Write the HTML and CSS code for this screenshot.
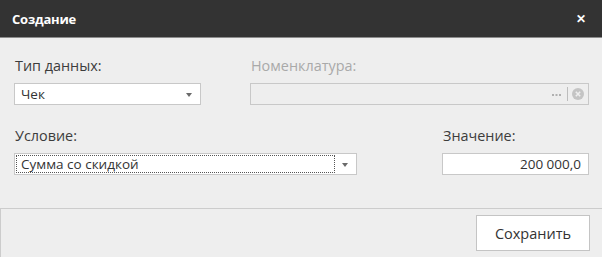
FILE: index.html
```html
<!DOCTYPE html>
<html lang="ru">
<head>
    <meta charset="UTF-8">
    <title>Создание</title>
    <link rel="stylesheet" href="styles.css">
</head>
<body>
    <div class="dialog">
        <div class="titlebar">
            <span class="title">Создание</span>
            <span class="close">&#x2715;</span>
        </div>
        <div class="content">
            <div class="row">
                <div class="field w-type">
                    <div class="label">Тип данных:</div>
                    <div class="box combo">
                        <span class="value">Чек</span>
                        <span class="arrow"></span>
                    </div>
                </div>
                <div class="field w-nom disabled">
                    <div class="label">Номенклатура:</div>
                    <div class="box lookup">
                        <span class="value"></span>
                        <span class="dots">
                            <svg width="9" height="2" viewBox="0 0 9 2">
                                <rect x="0" y="0" width="2" height="2" fill="#b0b0b0"/>
                                <rect x="3.5" y="0" width="2" height="2" fill="#b0b0b0"/>
                                <rect x="7" y="0" width="2" height="2" fill="#b0b0b0"/>
                            </svg>
                        </span>
                        <span class="sep"></span>
                        <span class="clear">
                            <svg width="12" height="12" viewBox="0 0 12 12">
                                <circle cx="6" cy="6" r="6" fill="#c4c4c4"/>
                                <path d="M3.8 3.8 L8.2 8.2 M8.2 3.8 L3.8 8.2" stroke="#eeeeee" stroke-width="1.6"/>
                            </svg>
                        </span>
                    </div>
                </div>
            </div>
            <div class="row second">
                <div class="field w-cond">
                    <div class="label">Условие:</div>
                    <div class="box combo">
                        <span class="value focused">Сумма со скидкой</span>
                        <span class="arrow"></span>
                    </div>
                </div>
                <div class="field w-val">
                    <div class="label">Значение:</div>
                    <div class="box number">
                        <span class="value">200 000,0</span>
                    </div>
                </div>
            </div>
        </div>
        <div class="footer">
            <button class="btn">Сохранить</button>
        </div>
    </div>
</body>
</html>
```

FILE: styles.css
```css
body {
    margin: 0;
    padding: 0;
    background: #eeeeee;
    font-family: "Open Sans", "Segoe UI", sans-serif;
    color: #333;
}
.dialog {
    width: 602px;
    height: 257px;
    background: #eeeeee;
    overflow: hidden;
}
.titlebar {
    height: 37px;
    background: #333333;
    border-bottom: 1px solid #8c8c8c;
    display: flex;
    align-items: center;
    justify-content: space-between;
    padding: 0 16px 0 12px;
}
.title {
    color: #fff;
    font-weight: 700;
    font-size: 13px;
    letter-spacing: -0.2px;
}
.close {
    color: #fff;
    font-size: 12px;
    font-weight: 700;
}
.content {
    padding: 19px 13px 33px 14px;
}
.row {
    display: flex;
    justify-content: space-between;
}
.row.second {
    margin-top: 22px;
}
.w-type { width: 187px; }
.w-nom { width: 339px; }
.w-cond { width: 343px; }
.w-val { width: 147px; }
.label {
    font-size: 14.4px;
    line-height: 18px;
    color: #3c3c3c;
    margin-bottom: 8px;
    padding-left: 1px;
}
.disabled .label {
    color: #a9a9a9;
}
.box {
    height: 22px;
    box-sizing: border-box;
    border: 1px solid #c8c8c8;
    background: #fff;
    display: flex;
    align-items: center;
    font-size: 13.5px;
    color: #333;
}
.box .value {
    flex: 1;
    padding-left: 6px;
}
.combo .value.focused {
    margin: 1px 0 1px 1px;
    height: 16px;
    line-height: 16px;
    padding-left: 4px;
    border: 1px dotted #555;
    flex: none;
    width: 313px;
}
.arrow {
    width: 0;
    height: 0;
    border-left: 3.5px solid transparent;
    border-right: 3.5px solid transparent;
    border-top: 4px solid #6a6a6a;
    margin: 1px 8px 0 auto;
}
.number .value {
    text-align: right;
    padding: 0 7px 0 0;
}
.lookup {
    background: #eeeeee;
}
.dots {
    display: flex;
    margin: 2px 6px 0 0;
}
.sep {
    width: 1px;
    height: 14px;
    background: #bdbdbd;
    margin-right: 4px;
}
.clear {
    display: flex;
    margin-right: 4px;
}
.footer {
    border-top: 1px solid #cccccc;
    border-left: 1px solid #cccccc;
    display: flex;
    justify-content: flex-end;
    padding: 6px 12px 0 0;
    height: 49px;
    box-sizing: border-box;
}
.btn {
    width: 114px;
    height: 36px;
    background: #fff;
    border: 1px solid #c4c4c4;
    font-family: "Open Sans", "Segoe UI", sans-serif;
    font-size: 14.5px;
    color: #333;
    padding: 0;
}
```
